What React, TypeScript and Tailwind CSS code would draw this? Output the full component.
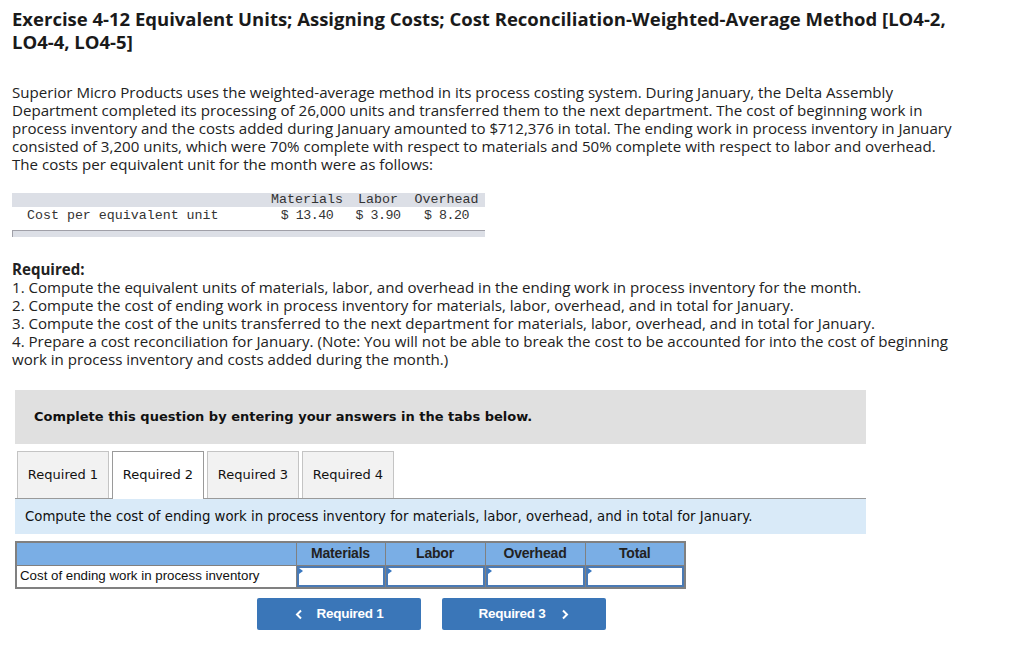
import React from 'react';

const body = { fontFamily: '"Open Sans", "Lato", sans-serif' };
const verdana = { fontFamily: '"DejaVu Sans", Verdana, sans-serif' };
const arial = { fontFamily: '"Liberation Sans", Arial, sans-serif' };
const mono = { fontFamily: '"Liberation Mono", "Courier New", monospace' };

const tabs = ['Required 1', 'Required 2', 'Required 3', 'Required 4'];
const cols = [
  { label: 'Materials', w: 'w-[89px]' },
  { label: 'Labor', w: 'w-[100px]' },
  { label: 'Overhead', w: 'w-[100px]' },
  { label: 'Total', w: 'w-[100px]' },
];

const intro = [
  'Superior Micro Products uses the weighted-average method in its process costing system. During January, the Delta Assembly',
  'Department completed its processing of 26,000 units and transferred them to the next department. The cost of beginning work in',
  'process inventory and the costs added during January amounted to $712,376 in total. The ending work in process inventory in January',
  'consisted of 3,200 units, which were 70% complete with respect to materials and 50% complete with respect to labor and overhead.',
  'The costs per equivalent unit for the month were as follows:',
];

const required = [
  '1. Compute the equivalent units of materials, labor, and overhead in the ending work in process inventory for the month.',
  '2. Compute the cost of ending work in process inventory for materials, labor, overhead, and in total for January.',
  '3. Compute the cost of the units transferred to the next department for materials, labor, overhead, and in total for January.',
  '4. Prepare a cost reconciliation for January. (Note: You will not be able to break the cost to be accounted for into the cost of beginning',
  'work in process inventory and costs added during the month.)',
];

const App: React.FC = () => {
  return (
    <div className="w-[1032px] h-[663px] bg-white text-[#222] overflow-hidden">
      {/* Heading */}
      <h1 className="pl-3 pt-[7px] text-[18.5px] leading-[23px] font-bold text-[#1a1a1a]" style={body}>
        <div className="whitespace-nowrap">Exercise 4-12 Equivalent Units; Assigning Costs; Cost Reconciliation-Weighted-Average Method [LO4-2,</div>
        <div>LO4-4, LO4-5]</div>
      </h1>

      <div className="pl-3 mt-[30px] text-[15.1px] leading-[18px] text-[#222]" style={body}>
        {intro.map(l => (
          <div key={l} className="whitespace-nowrap">{l}</div>
        ))}
      </div>

      {/* Cost per equivalent unit table */}
      <div className="ml-3 mt-[20px] w-[473px] text-[13.3px] text-[#333]" style={mono}>
        <div className="flex h-[14px] items-center bg-[#dcdfe6]">
          <div className="w-[254px]" />
          <div className="w-[82px] text-center">Materials</div>
          <div className="w-[60px] text-center">Labor</div>
          <div className="w-[77px] text-center">Overhead</div>
        </div>
        <div className="flex h-[18px] items-center">
          <div className="w-[254px] pl-[15px]">Cost per equivalent unit</div>
          <div className="w-[82px] text-center tracking-[-0.5px]">$ 13.40</div>
          <div className="w-[60px] text-center tracking-[-0.5px]">$ 3.90</div>
          <div className="w-[77px] text-center tracking-[-0.5px]">$ 8.20</div>
        </div>
        <div className="mt-[5px] h-[7px] bg-[#dcdfe6] border-t border-l border-[#a0a0a8]" />
      </div>

      {/* Required */}
      <div className="pl-3 mt-[23px] text-[15.1px] leading-[18px] text-[#222]" style={body}>
        <div className="font-bold">Required:</div>
        {required.map(l => (
          <div key={l} className="whitespace-nowrap">{l}</div>
        ))}
      </div>

      {/* Answer area */}
      <div className="ml-[15px] mt-[22px] w-[851px]" style={verdana}>
        <div className="h-[54px] bg-[#e0e0e0] flex items-center pl-[19px] text-[13px] font-bold text-[#111]">
          Complete this question by entering your answers in the tabs below.
        </div>

        <div className="mt-[7px] flex items-end border-b border-[#9a9a9a] pl-[2px] gap-[3px]">
          {tabs.map((t, i) => (
            <div
              key={t}
              className={
                i === 1
                  ? 'w-[92px] h-[48px] -mb-px pb-px bg-white border border-b-0 border-[#9a9a9a] flex items-center justify-center text-[13px] text-[#111]'
                  : 'w-[92px] h-[47px] bg-[#f2f2f2] border border-b-0 border-[#c4c4c4] flex items-center justify-center text-[13px] text-[#111]'
              }
            >
              {t}
            </div>
          ))}
        </div>

        <div className="h-[35px] bg-[#d9eaf8] flex items-center pl-[10px] text-[13.3px] text-[#111]">
          Compute the cost of ending work in process inventory for materials, labor, overhead, and in total for January.
        </div>

        {/* Input table */}
        <table className="mt-[7px] border-collapse border-2 border-[#808080]" style={arial}>
          <thead>
            <tr className="bg-[#7aaee5] h-[23px]">
              <th className="w-[280px] border border-[#808080]" />
              {cols.map(c => (
                <th key={c.label} className={`${c.w} border border-[#808080] font-bold text-[14px] text-[#222] text-center tracking-[-0.2px]`}>
                  {c.label}
                </th>
              ))}
            </tr>
          </thead>
          <tbody>
            <tr className="h-[23px]">
              <td className="border border-[#808080] pl-[3px] text-left text-[#111] text-[13.3px]">
                Cost of ending work in process inventory
              </td>
              {cols.map(c => (
                <td key={c.label} className="border border-[#808080] p-0">
                  <div className="relative h-[21px] border-2 border-[#4a7ab5] bg-white">
                    <span className="absolute left-0 top-0 w-0 h-0 border-t-[3px] border-b-[3px] border-l-[4px] border-t-transparent border-b-transparent border-l-[#3a78c0]" />
                  </div>
                </td>
              ))}
            </tr>
          </tbody>
        </table>

        {/* Nav buttons */}
        <div className="mt-[9px] flex gap-[21px] pl-[242px]" style={arial}>
          <button className="w-[164px] h-[32px] bg-[#3a76b8] rounded-[2px] text-white text-[13.5px] font-bold tracking-[-0.3px] flex items-center justify-center gap-[14px]">
            <svg width="8" height="11" viewBox="0 0 8 11"><path d="M6 1.5 L2 5.5 L6 9.5" stroke="white" strokeWidth="2" fill="none" /></svg>
            Required 1
          </button>
          <button className="w-[164px] h-[32px] bg-[#3a76b8] rounded-[2px] text-white text-[13.5px] font-bold tracking-[-0.3px] flex items-center justify-center gap-[16px]">
            Required 3
            <svg width="8" height="11" viewBox="0 0 8 11"><path d="M2 1.5 L6 5.5 L2 9.5" stroke="white" strokeWidth="2" fill="none" /></svg>
          </button>
        </div>
      </div>
    </div>
  );
};

export default App;
